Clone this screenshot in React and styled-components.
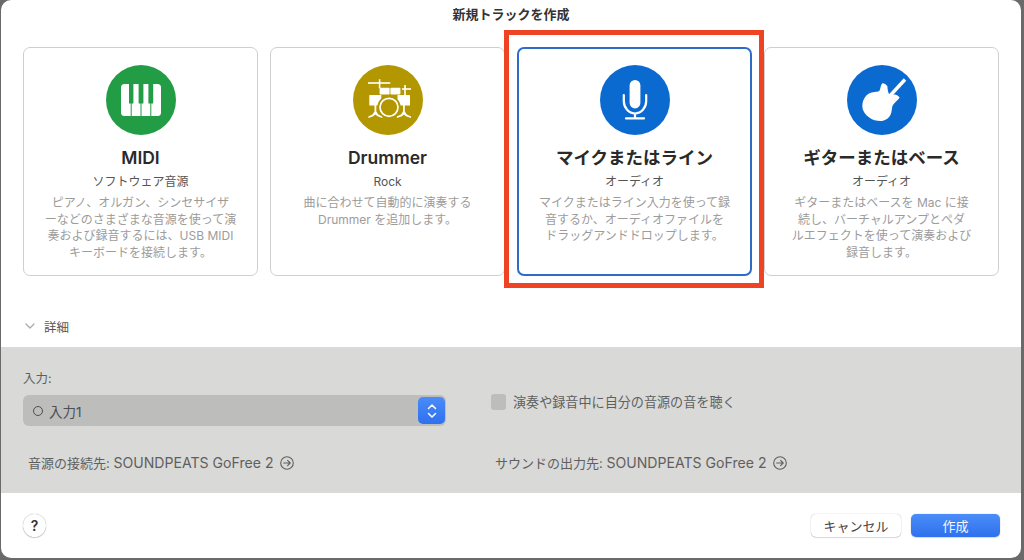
import React from 'react'
import styled, { createGlobalStyle } from 'styled-components'

const GlobalStyle = createGlobalStyle`
  html, body {
    margin: 0;
    padding: 0;
    width: 1024px;
    height: 560px;
    overflow: hidden;
    background: #6a6a6a;
  }
  * {
    box-sizing: border-box;
  }
`

const Desktop = styled.div`
  width: 1024px;
  height: 560px;
  padding: 0 3px 2px 1px;
  font-family: Inter, 'Noto Sans CJK JP', sans-serif;
`

const Sheet = styled.div`
  position: relative;
  height: 100%;
  display: flex;
  flex-direction: column;
  background: #fff;
  border-radius: 10px;
  overflow: hidden;
`

const Title = styled.h1`
  margin: 0;
  height: 47px;
  padding-top: 5px;
  text-align: center;
  font-size: 13px;
  line-height: 18px;
  font-weight: 700;
  color: #333;
`

const CardRow = styled.div`
  display: grid;
  grid-template-columns: repeat(4, 235px);
  gap: 12px;
  padding-left: 22px;
`

const Card = styled.div`
  height: 229px;
  padding-top: 17px;
  display: flex;
  flex-direction: column;
  align-items: center;
  background: #fff;
  border-radius: 7px;
  border: ${p => (p.$selected ? '2px solid #2f6cc9' : '1px solid #cfcfcf')};
`

const Badge = styled.div`
  width: 70px;
  height: 70px;
  border-radius: 50%;
  flex: none;
  background: ${p => p.$color};
  margin-top: ${p => (p.$selected ? '-1px' : '0')};
`

const CardName = styled.div`
  margin-top: 12px;
  height: 22px;
  font-size: 17.5px;
  line-height: 22px;
  font-weight: 600;
  color: #2a2a2a;
  white-space: nowrap;
`

const CardKind = styled.div`
  margin-top: 4px;
  height: 18px;
  font-size: 12px;
  line-height: 18px;
  color: #555;
  white-space: nowrap;
`

const CardText = styled.div`
  margin-top: 4px;
  font-size: 12px;
  line-height: 16.5px;
  text-align: center;
  color: #9c9c9c;
  white-space: nowrap;
`

const Highlight = styled.div`
  position: absolute;
  left: 503px;
  top: 30px;
  width: 260px;
  height: 258px;
  border: 5px solid #ef4423;
  pointer-events: none;
`

const Disclosure = styled.div`
  margin-top: 36px;
  height: 35px;
  padding: 0 0 7px 24px;
  display: flex;
  align-items: center;
  gap: 9px;
  font-size: 12.5px;
  color: #555;
`

const Panel = styled.div`
  height: 146px;
  padding: 22px 22px 0;
  background: #d9d9d7;
  display: grid;
  grid-template-columns: 423px 1fr;
  grid-template-rows: 57px 1fr;
  column-gap: 45px;
`

const InputBlock = styled.div`
  display: flex;
  flex-direction: column;
`

const FieldLabel = styled.div`
  height: 20px;
  margin-bottom: 6px;
  font-size: 12.5px;
  line-height: 20px;
  color: #5f5f5f;
`

const Select = styled.div`
  height: 31px;
  padding: 0 1px 0 10px;
  display: flex;
  align-items: center;
  gap: 6px;
  border-radius: 6px;
  background: #bdbdbb;
  font-size: 13.5px;
  color: #4f4f4f;
`

const Dot = styled.span`
  width: 10px;
  height: 10px;
  border-radius: 50%;
  border: 1px solid #4f4f4f;
`

const SelectLabel = styled.span`
  flex: 1;
`

const Stepper = styled.span`
  width: 27px;
  height: 27px;
  display: flex;
  align-items: center;
  justify-content: center;
  border-radius: 5px;
  background: linear-gradient(#4a8cf9, #2f70ee);
`

const MonitorRow = styled.div`
  padding-top: 24px;
  display: flex;
  align-items: flex-start;
  gap: 7px;
  font-size: 13.1px;
  line-height: 18px;
  color: #5f5f5f;
`

const Checkbox = styled.span`
  width: 15px;
  height: 16px;
  margin-top: 1px;
  border-radius: 3px;
  background: #bdbdbb;
  flex: none;
`

const Routing = styled.div`
  padding: 28px 0 0 ${p => p.$inset}px;
  display: flex;
  align-items: flex-start;
  gap: 6px;
  font-size: 13px;
  line-height: 18px;
  color: #5f5f5f;
  white-space: nowrap;

  svg {
    margin-top: 2px;
    flex: none;
  }
`

const Device = styled.span`
  font-size: 14.1px;
`

const Footer = styled.div`
  flex: 1;
  padding: 0 21px 0 22px;
  display: flex;
  align-items: center;
  gap: 10px;
`

const HelpButton = styled.button`
  width: 23px;
  height: 23px;
  padding: 0;
  margin-right: auto;
  border: 0;
  border-radius: 50%;
  background: #fff;
  box-shadow: 0 0 1px rgba(0, 0, 0, 0.45), 0 1px 1px rgba(0, 0, 0, 0.15);
  font: 600 14px/23px Inter, sans-serif;
  color: #333;
`

const ActionButton = styled.button`
  width: ${p => (p.$primary ? '89px' : '90px')};
  height: 23px;
  padding: 0;
  border: 0;
  border-radius: 5px;
  font-family: inherit;
  font-size: 13px;
  line-height: 22px;
  color: ${p => (p.$primary ? '#f4f7ff' : '#444')};
  background: ${p => (p.$primary ? 'linear-gradient(#4b8df8, #2f70ee)' : '#fff')};
  box-shadow: 0 0 1px rgba(0, 0, 0, 0.4), 0 1px 1px rgba(0, 0, 0, 0.12);
`

const PianoIcon = () => (
  <svg width='70' height='70' viewBox='0 0 70 70'>
    <rect x='15' y='19' width='40' height='32' rx='3.5' fill='#fff' />
    <g fill='#239c46'>
      <rect x='23' y='19' width='4.4' height='19.5' />
      <rect x='32.6' y='19' width='4.8' height='19.5' />
      <rect x='42.4' y='19' width='4.8' height='19.5' />
      <rect x='24.7' y='38' width='1' height='13' />
      <rect x='34.5' y='38' width='1' height='13' />
      <rect x='44.3' y='38' width='1' height='13' />
    </g>
  </svg>
)

const DrumIcon = () => (
  <svg width='70' height='70' viewBox='0 0 70 70'>
    <g fill='#fff'>
      <rect x='15' y='17.2' width='22.3' height='1.6' />
      <rect x='25.8' y='14.3' width='1.6' height='9' />
      <rect x='26.6' y='22.7' width='10' height='6.8' rx='.8' />
      <rect x='37.4' y='22.7' width='10' height='6.8' rx='.8' />
      <rect x='49' y='23.2' width='9' height='1.6' />
      <rect x='51.2' y='20' width='1.6' height='11' />
      <rect x='16.3' y='30' width='12' height='10.5' rx='.6' />
      <rect x='44.5' y='30' width='12.5' height='10.5' rx='.6' />
      <path d='M21.5 40h1.8v6.5l2 3 4.2 2v1.6l-5-1.8-2.1-1.8-2.1 1.8-5 1.8v-1.6l4.2-2 2-3z' />
      <path d='M50 40h1.8v6.5l2 3 4.2 2v1.6l-5-1.8-2.1-1.8-2.1 1.8-5 1.8v-1.6l4.2-2 2-3z' />
    </g>
    <circle cx='36' cy='42.3' r='11.6' fill='#b39700' />
    <circle cx='36' cy='42.3' r='9' fill='none' stroke='#fff' strokeWidth='1.7' />
  </svg>
)

const MicIcon = () => (
  <svg width='70' height='70' viewBox='0 0 70 70'>
    <rect x='29.6' y='15' width='10.8' height='28.4' rx='5.4' fill='#fff' />
    <path
      d='M23.8 30v6a11.2 12.5 0 0 0 22.4 0v-6M35 49v4M26 53.4h18'
      fill='none'
      stroke='#fff'
      strokeWidth='2.2'
      strokeLinecap='round'
    />
  </svg>
)

const GuitarIcon = () => (
  <svg width='70' height='70' viewBox='0 0 70 70'>
    <path d='M40 34 58 14.5' stroke='#fff' strokeWidth='3.4' fill='none' />
    <path
      fill='#fff'
      d='M15.3 41c0-7 4.5-12.5 9.5-13.5 3.5-.7 6.3-.4 7.8-2 1-1.8.8-5.2 2.7-7.2 1.6-.2 3.7 1 5 2.7.4 3.2.6 7 2.5 9.2 2.2-.6 4.5-1 6-.5 1.8.6 3.2 1.5 3.8 2.8-1.5 2.5-5 5-6.8 7.7-1.2 2.5-.6 6.5-2.4 9.8-1.9 3.6-5.5 6-9.8 6-4.2 0-8-1-11-3.2-4.8-3.4-7.3-7.3-7.3-11.8z'
    />
  </svg>
)

const ArrowCircle = () => (
  <svg width='14' height='14' viewBox='0 0 14 14' fill='none' stroke='#5f5f5f' strokeWidth='1.1'>
    <circle cx='7' cy='7' r='6.3' />
    <path d='M3.7 7h6.4M7.6 4.4 10.2 7 7.6 9.6' strokeLinecap='round' strokeLinejoin='round' />
  </svg>
)

const tracks = [
  {
    name: 'MIDI',
    kind: 'ソフトウェア音源',
    color: '#239c46',
    icon: <PianoIcon />,
    lines: [
      'ピアノ、オルガン、シンセサイザ',
      'ーなどのさまざまな音源を使って演',
      '奏および録音するには、USB MIDI',
      'キーボードを接続します。'
    ]
  },
  {
    name: 'Drummer',
    kind: 'Rock',
    color: '#b39700',
    icon: <DrumIcon />,
    lines: ['曲に合わせて自動的に演奏する', 'Drummer を追加します。']
  },
  {
    name: 'マイクまたはライン',
    kind: 'オーディオ',
    color: '#0b6acf',
    icon: <MicIcon />,
    selected: true,
    lines: [
      'マイクまたはライン入力を使って録',
      '音するか、オーディオファイルを',
      'ドラッグアンドドロップします。'
    ]
  },
  {
    name: 'ギターまたはベース',
    kind: 'オーディオ',
    color: '#0b6acf',
    icon: <GuitarIcon />,
    lines: [
      'ギターまたはベースを Mac に接',
      '続し、バーチャルアンプとペダ',
      'ルエフェクトを使って演奏および',
      '録音します。'
    ]
  }
]

const App = () => (
  <>
    <GlobalStyle />
    <Desktop>
      <Sheet>
        <Title>新規トラックを作成</Title>
        <CardRow>
          {tracks.map(track => (
            <Card key={track.name} $selected={track.selected}>
              <Badge $color={track.color} $selected={track.selected}>
                {track.icon}
              </Badge>
              <CardName>{track.name}</CardName>
              <CardKind>{track.kind}</CardKind>
              <CardText>
                {track.lines.map(line => (
                  <div key={line}>{line}</div>
                ))}
              </CardText>
            </Card>
          ))}
        </CardRow>
        <Highlight />
        <Disclosure>
          <svg width='10' height='6' viewBox='0 0 10 6' fill='none' stroke='#a8a8a8' strokeWidth='1.2'>
            <path d='M1 1l4 4 4-4' strokeLinecap='round' strokeLinejoin='round' />
          </svg>
          詳細
        </Disclosure>
        <Panel>
          <InputBlock>
            <FieldLabel>入力:</FieldLabel>
            <Select>
              <Dot />
              <SelectLabel>入力1</SelectLabel>
              <Stepper>
                <svg width='12' height='18' viewBox='0 0 12 18' fill='none' stroke='#fff' strokeWidth='1.5'>
                  <path d='M2.5 6.5 6 3l3.5 3.5M2.5 11.5 6 15l3.5-3.5' strokeLinecap='round' strokeLinejoin='round' />
                </svg>
              </Stepper>
            </Select>
          </InputBlock>
          <MonitorRow>
            <Checkbox />
            演奏や録音中に自分の音源の音を聴く
          </MonitorRow>
          <Routing $inset={5}>
            <span>音源の接続先: <Device>SOUNDPEATS GoFree 2</Device></span>
            <ArrowCircle />
          </Routing>
          <Routing $inset={4}>
            <span>サウンドの出力先: <Device>SOUNDPEATS GoFree 2</Device></span>
            <ArrowCircle />
          </Routing>
        </Panel>
        <Footer>
          <HelpButton>?</HelpButton>
          <ActionButton>キャンセル</ActionButton>
          <ActionButton $primary>作成</ActionButton>
        </Footer>
      </Sheet>
    </Desktop>
  </>
)

export default App
